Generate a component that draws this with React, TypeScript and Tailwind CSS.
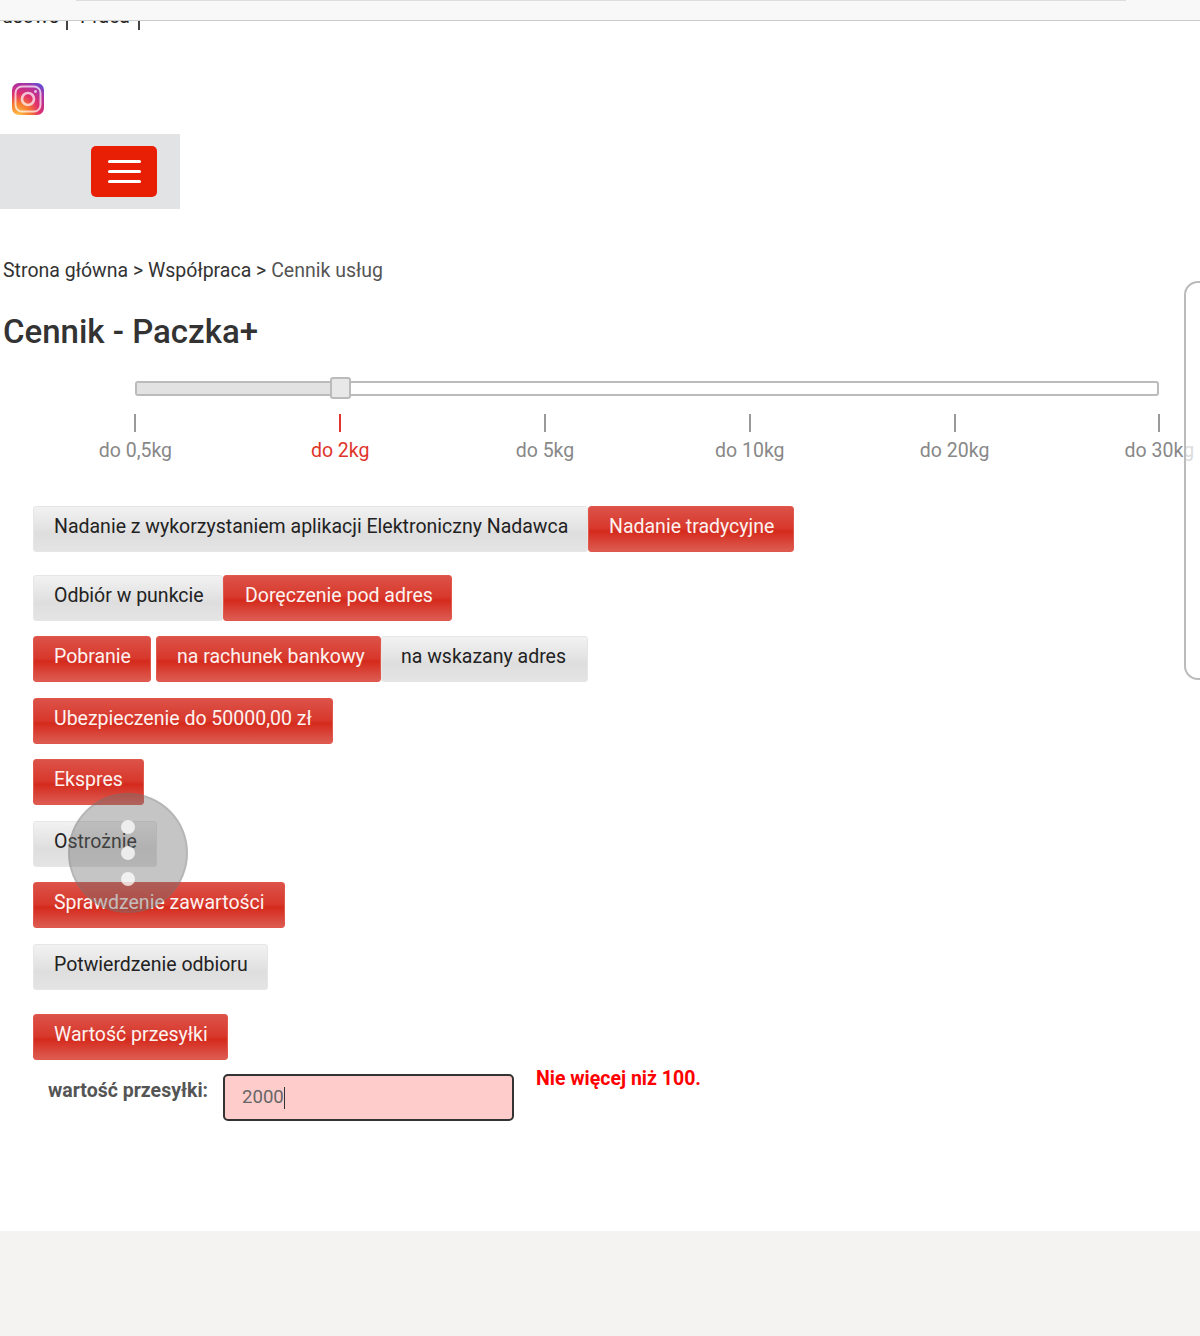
import React from 'react'

const redBtn =
    'bg-[linear-gradient(#dc5248_0%,#d8382c_48%,#d42a1c_55%,#dd5c52_100%)] border-[#e2574c] text-[#fdf2f0]'
const grayBtn = 'bg-[linear-gradient(#f2f2f2_0%,#e2e2e2_50%,#dedede_60%,#e4e4e4_100%)] border-[#e6e6e6] text-[#222]'

function Btn({ label, on, className = 'pl-[20px]' }: { label: string; on?: boolean; className?: string }) {
    return (
        <div
            className={`h-[46px] shrink-0 flex items-center whitespace-nowrap border rounded-[3px] pb-[4px] ${on ? redBtn : grayBtn} ${className}`}
        >
            {label}
        </div>
    )
}

function Tick({ label, on }: { label: string; on?: boolean }) {
    return (
        <div className={`w-[204.8px] shrink-0 flex flex-col items-center ${on ? 'text-[#e0352b]' : 'text-[#888]'}`}>
            <div className={`w-[2px] h-[18px] ${on ? 'bg-[#e0352b]' : 'bg-[#999]'}`} />
            <div className="mt-[6px] h-[26px] leading-[26px] whitespace-nowrap">{label}</div>
        </div>
    )
}

function Instagram() {
    return (
        <svg width="34" height="34" viewBox="0 0 34 34" className="block">
            <defs>
                <radialGradient id="ig" cx="20%" cy="100%" r="120%">
                    <stop offset="0%" stopColor="#fdc14c" />
                    <stop offset="30%" stopColor="#f77b2e" />
                    <stop offset="55%" stopColor="#e1306c" />
                    <stop offset="80%" stopColor="#b0309f" />
                    <stop offset="100%" stopColor="#5b51d8" />
                </radialGradient>
            </defs>
            <rect x="1" y="1" width="32" height="32" rx="7" fill="url(#ig)" />
            <rect x="4.5" y="4.5" width="25" height="25" rx="6.5" fill="none" stroke="#fff" strokeOpacity="0.7" strokeWidth="2" />
            <circle cx="17" cy="17" r="6" fill="none" stroke="#fff" strokeOpacity="0.7" strokeWidth="2.6" />
            <circle cx="24.5" cy="9.5" r="1.4" fill="#fff" fillOpacity="0.7" />
        </svg>
    )
}

export default function App() {
    return (
        <div className="relative h-[1336px] overflow-hidden bg-white flex flex-col font-['Roboto',sans-serif] text-[19.5px] text-[#222]">
            {/* Browser bar */}
            <div className="absolute top-0 left-0 right-0 h-[21px] bg-[#f8f8f8] border-b border-[#ccc] z-10">
                <div className="ml-[76px] w-[1050px] h-px bg-[#ddd]" />
            </div>

            {/* Nav cut off by the bar */}
            <div className="h-[82px] shrink-0 pl-[2px] pt-[5px] flex items-start whitespace-nowrap leading-[24px]">
                <span className="w-[66px] h-[25px] border-r-2 border-[#444]">usowe</span>
                <span className="w-[72px] h-[25px] pl-[12px] border-r-2 border-[#444]">Praca</span>
            </div>

            <div className="h-[52px] shrink-0 pl-[11px]">
                <Instagram />
            </div>

            {/* Menu */}
            <div className="w-[180px] h-[75px] shrink-0 bg-[#e1e3e4] flex justify-end pr-[23px] pt-[12px]">
                <div className="w-[66px] h-[51px] bg-[#e81e05] rounded-[5px] flex flex-col items-center justify-center gap-[7px]">
                    <div className="w-[33px] h-[3px] rounded-full bg-white" />
                    <div className="w-[33px] h-[3px] rounded-full bg-white" />
                    <div className="w-[33px] h-[3px] rounded-full bg-white" />
                </div>
            </div>

            {/* Breadcrumbs */}
            <div className="mt-[48px] pl-[3px] h-[28px] leading-[28px] shrink-0 whitespace-nowrap text-[#333]">
                Strona główna &gt; Współpraca &gt; <span className="text-[#555]">Cennik usług</span>
            </div>

            <h1 className="mt-[25px] pl-[3px] h-[44px] leading-[44px] shrink-0 text-[33px] font-medium text-[#333]">
                Cennik - Paczka+
            </h1>

            {/* Slider */}
            <div className="mt-[23px] ml-[135px] w-[1024px] h-[22px] shrink-0 relative flex items-center">
                <div className="w-full h-[15px] border-2 border-[#bbb] rounded-[3px] bg-white overflow-hidden">
                    <div className="w-[205px] h-full bg-[#e2e2e2]" />
                </div>
                <div className="absolute left-[195px] top-0 w-[21px] h-[22px] bg-[#e8e8e8] border-2 border-[#bbb] rounded-[3px]" />
            </div>

            <div className="mt-[15px] ml-[33px] flex shrink-0">
                <Tick label="do 0,5kg" />
                <Tick label="do 2kg" on />
                <Tick label="do 5kg" />
                <Tick label="do 10kg" />
                <Tick label="do 20kg" />
                <Tick label="do 30kg" />
            </div>

            {/* Options */}
            <div className="mt-[42px] ml-[33px] flex flex-col items-start">
                <div className="flex">
                    <Btn label="Nadanie z wykorzystaniem aplikacji Elektroniczny Nadawca" className="w-[555px] pl-[20px]" />
                    <Btn label="Nadanie tradycyjne" on className="w-[206px] pl-[20px]" />
                </div>
                <div className="flex mt-[23px]">
                    <Btn label="Odbiór w punkcie" className="w-[190px] pl-[20px]" />
                    <Btn label="Doręczenie pod adres" on className="w-[229px] pl-[21px]" />
                </div>
                <div className="flex mt-[15px]">
                    <Btn label="Pobranie" on className="w-[118px] mr-[5px] pl-[20px]" />
                    <Btn label="na rachunek bankowy" on className="w-[225px] pl-[20px]" />
                    <Btn label="na wskazany adres" className="w-[207px] pl-[19px]" />
                </div>
                <Btn label="Ubezpieczenie do 50000,00 zł" on className="w-[300px] mt-[16px] pl-[20px]" />
                <Btn label="Ekspres" on className="w-[111px] mt-[15px] pl-[20px]" />
                <Btn label="Ostrożnie" className="w-[124px] mt-[16px] pl-[20px]" />
                <Btn label="Sprawdzenie zawartości" on className="w-[252px] mt-[15px] pl-[20px]" />
                <Btn label="Potwierdzenie odbioru" className="w-[235px] mt-[16px] pl-[20px]" />
                <Btn label="Wartość przesyłki" on className="w-[195px] mt-[24px] pl-[20px]" />
            </div>

            {/* Value input */}
            <div className="mt-[14px] flex items-start shrink-0">
                <div className="ml-[48px] w-[175px] mt-[5px] h-[24px] leading-[24px] font-bold text-[#555] whitespace-nowrap">
                    wartość przesyłki:
                </div>
                <div className="w-[291px] h-[47px] bg-[#ffcccc] border-2 border-[#333] rounded-[5px] flex items-center pl-[17px] text-[18.6px] text-[#666]">
                    2000
                    <span className="w-px h-[22px] bg-[#333]" />
                </div>
                <div className="ml-[22px] mt-[-7px] h-[24px] leading-[24px] font-bold text-[#f00] whitespace-nowrap">
                    Nie więcej niż 100.
                </div>
            </div>

            <div className="mt-auto h-[105px] shrink-0 bg-[#f4f3f2]" />

            {/* Side drawer edge */}
            <div className="absolute left-[1184px] top-[281px] w-[40px] h-[399px] bg-white/70 border-2 border-[#bbb] rounded-[14px]" />

            {/* Floating assistive button */}
            <div className="absolute left-[68px] top-[793px] w-[120px] h-[120px] rounded-full bg-[#6e6e6e]/40 border-2 border-[#777]/20 flex flex-col items-center justify-center gap-[12px]">
                <div className="w-[14px] h-[14px] rounded-full bg-white/75" />
                <div className="w-[14px] h-[14px] rounded-full bg-white/75" />
                <div className="w-[14px] h-[14px] rounded-full bg-white/75" />
            </div>
        </div>
    )
}
